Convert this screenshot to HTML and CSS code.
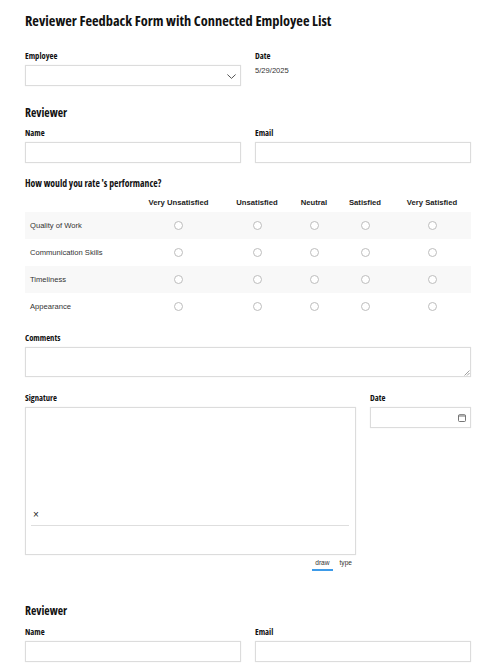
FILE: index.html
```html
<!DOCTYPE html>
<html lang="en">
<head>
    <meta charset="UTF-8">
    <title>Reviewer Feedback Form with Connected Employee List</title>
    <link rel="stylesheet" href="styles.css">
</head>
<body>

    <form class="form">
        <h1 class="title">Reviewer Feedback Form with Connected Employee List</h1>

        <div class="row row-employee">
            <div class="field">
                <label class="label">Employee</label>
                <div class="box select">
                    <svg class="chevron" width="9" height="5" viewBox="0 0 9 5">
                        <path d="M0.4 0.5 L4.5 4.4 L8.6 0.5" fill="none" stroke="#555" stroke-width="1"/>
                    </svg>
                </div>
            </div>
            <div class="field">
                <label class="label">Date</label>
                <div class="date-value">5/29/2025</div>
            </div>
        </div>

        <h2 class="section">Reviewer</h2>
        <div class="row">
            <div class="field">
                <label class="label">Name</label>
                <div class="box"></div>
            </div>
            <div class="field">
                <label class="label">Email</label>
                <div class="box"></div>
            </div>
        </div>

        <label class="label rating-label">How would you rate 's performance?</label>
        <table class="rating">
            <thead>
                <tr>
                    <th class="col-name"></th>
                    <th class="col-a">Very Unsatisfied</th>
                    <th class="col-b">Unsatisfied</th>
                    <th class="col-c">Neutral</th>
                    <th class="col-d">Satisfied</th>
                    <th class="col-e">Very Satisfied</th>
                </tr>
            </thead>
            <tbody>
                <tr>
                    <td>Quality of Work</td>
                    <td><span class="radio"></span></td>
                    <td><span class="radio"></span></td>
                    <td><span class="radio"></span></td>
                    <td><span class="radio"></span></td>
                    <td><span class="radio"></span></td>
                </tr>
                <tr>
                    <td>Communication Skills</td>
                    <td><span class="radio"></span></td>
                    <td><span class="radio"></span></td>
                    <td><span class="radio"></span></td>
                    <td><span class="radio"></span></td>
                    <td><span class="radio"></span></td>
                </tr>
                <tr>
                    <td>Timeliness</td>
                    <td><span class="radio"></span></td>
                    <td><span class="radio"></span></td>
                    <td><span class="radio"></span></td>
                    <td><span class="radio"></span></td>
                    <td><span class="radio"></span></td>
                </tr>
                <tr>
                    <td>Appearance</td>
                    <td><span class="radio"></span></td>
                    <td><span class="radio"></span></td>
                    <td><span class="radio"></span></td>
                    <td><span class="radio"></span></td>
                    <td><span class="radio"></span></td>
                </tr>
            </tbody>
        </table>

        <div class="field comments">
            <label class="label">Comments</label>
            <div class="box textarea">
                <svg class="grip" width="6" height="6" viewBox="0 0 6 6">
                    <path d="M0.5 5.5 L5.5 0.5 M3 5.5 L5.5 3" fill="none" stroke="#888" stroke-width="0.8"/>
                </svg>
            </div>
        </div>

        <div class="sign-row">
            <div class="field">
                <label class="label">Signature</label>
                <div class="box sign-pad">
                    <span class="sign-x">×</span>
                    <div class="sign-line"></div>
                </div>
                <div class="sign-tabs">
                    <span class="tab tab-active">draw</span>
                    <span class="tab">type</span>
                </div>
            </div>
            <div class="field">
                <label class="label">Date</label>
                <div class="box date-input">
                    <svg width="8" height="8" viewBox="0 0 8 8">
                        <rect x="0.5" y="0.7" width="7" height="6.8" rx="1" fill="none" stroke="#666" stroke-width="0.9"/>
                        <path d="M0.5 2 H7.5" stroke="#666" stroke-width="0.9"/>
                    </svg>
                </div>
            </div>
        </div>

        <h2 class="section section-last">Reviewer</h2>
        <div class="row">
            <div class="field">
                <label class="label">Name</label>
                <div class="box"></div>
            </div>
            <div class="field">
                <label class="label">Email</label>
                <div class="box"></div>
            </div>
        </div>
    </form>

</body>
</html>
```

FILE: styles.css
```css
html, body {
    height: 672px;
    overflow: hidden;
}

body {
    margin: 0;
    background-color: #ffffff;
    color: #222;
    font-family: 'Liberation Sans', Arial, sans-serif;
}

.form {
    padding: 11px 25px 0;
}

.title,
.section,
.label {
    font-family: 'Open Sans', sans-serif;
    font-stretch: 75%;
    font-weight: 700;
    color: #111;
    margin: 0;
}

.title {
    font-size: 14.4px;
    line-height: 20px;
}

.row {
    display: grid;
    grid-template-columns: 216px 216px;
    gap: 14px;
}

.row-employee {
    margin-top: 18px;
}

.section {
    font-size: 11.7px;
    line-height: 18px;
    margin-top: 17px;
    margin-bottom: 5px;
}

.section-last {
    margin-top: 30px;
    margin-bottom: 6px;
}

.label {
    display: block;
    font-size: 8.6px;
    line-height: 14px;
    margin-bottom: 2px;
}

.box {
    box-sizing: border-box;
    height: 21px;
    border: 1px solid #dcdcdc;
    background-color: #ffffff;
    box-shadow: 0 0 1px #e6e6e6;
}

.select {
    display: flex;
    align-items: center;
    justify-content: flex-end;
    padding: 1px 4px 0 0;
}

.date-value {
    font-size: 7.6px;
    line-height: 12px;
    margin-top: 1px;
    color: #333;
}

.label.rating-label {
    font-size: 9.7px;
    margin-top: 14px;
    margin-bottom: 0;
}

.rating {
    width: 446px;
    table-layout: fixed;
    border-collapse: collapse;
    margin-top: 2px;
}

.rating th {
    height: 19px;
    padding: 0;
    font-size: 7.7px;
    font-weight: 700;
    text-align: center;
    color: #222;
}

.col-name { width: 109px; }
.col-a { width: 89px; }
.col-b { width: 68px; }
.col-c { width: 46px; }
.col-d { width: 56px; }
.col-e { width: 78px; }

.rating td {
    height: 27px;
    padding: 0;
    text-align: center;
    vertical-align: middle;
}

.rating td:first-child {
    padding-left: 5px;
    padding-bottom: 1px;
    box-sizing: border-box;
    font-size: 7.6px;
    text-align: left;
    white-space: nowrap;
    color: #333;
}

.rating tbody tr:nth-child(odd) {
    background-color: #f8f8f8;
}

.radio {
    display: block;
    box-sizing: border-box;
    width: 9px;
    height: 9px;
    margin: 0 auto;
    border: 1px solid #bdbdbd;
    border-radius: 50%;
    background-color: #ffffff;
}

.comments {
    margin-top: 11px;
}

.textarea {
    position: relative;
    height: 30px;
}

.grip {
    position: absolute;
    right: 0;
    bottom: 0;
}

.sign-row {
    display: grid;
    grid-template-columns: 331px 101px;
    gap: 14px;
    margin-top: 14px;
}

.sign-pad {
    height: 148px;
    padding: 100px 6px 0 5px;
}

.sign-x {
    display: block;
    font-size: 10px;
    line-height: 14px;
    height: 17px;
    margin-left: 2px;
    color: #222;
}

.sign-line {
    height: 1px;
    background-color: #dedede;
}

.sign-tabs {
    display: flex;
    justify-content: flex-end;
    gap: 6px;
    padding: 3px 3px 0 0;
}

.tab {
    font-size: 6.6px;
    line-height: 10px;
    padding: 0 1px 1px;
    color: #333;
}

.tab-active {
    padding: 0 3px 1px;
    border-bottom: 2px solid #3d9be9;
}

.date-input {
    display: flex;
    align-items: center;
    justify-content: flex-end;
    padding: 1px 4px 0 0;
}
```
